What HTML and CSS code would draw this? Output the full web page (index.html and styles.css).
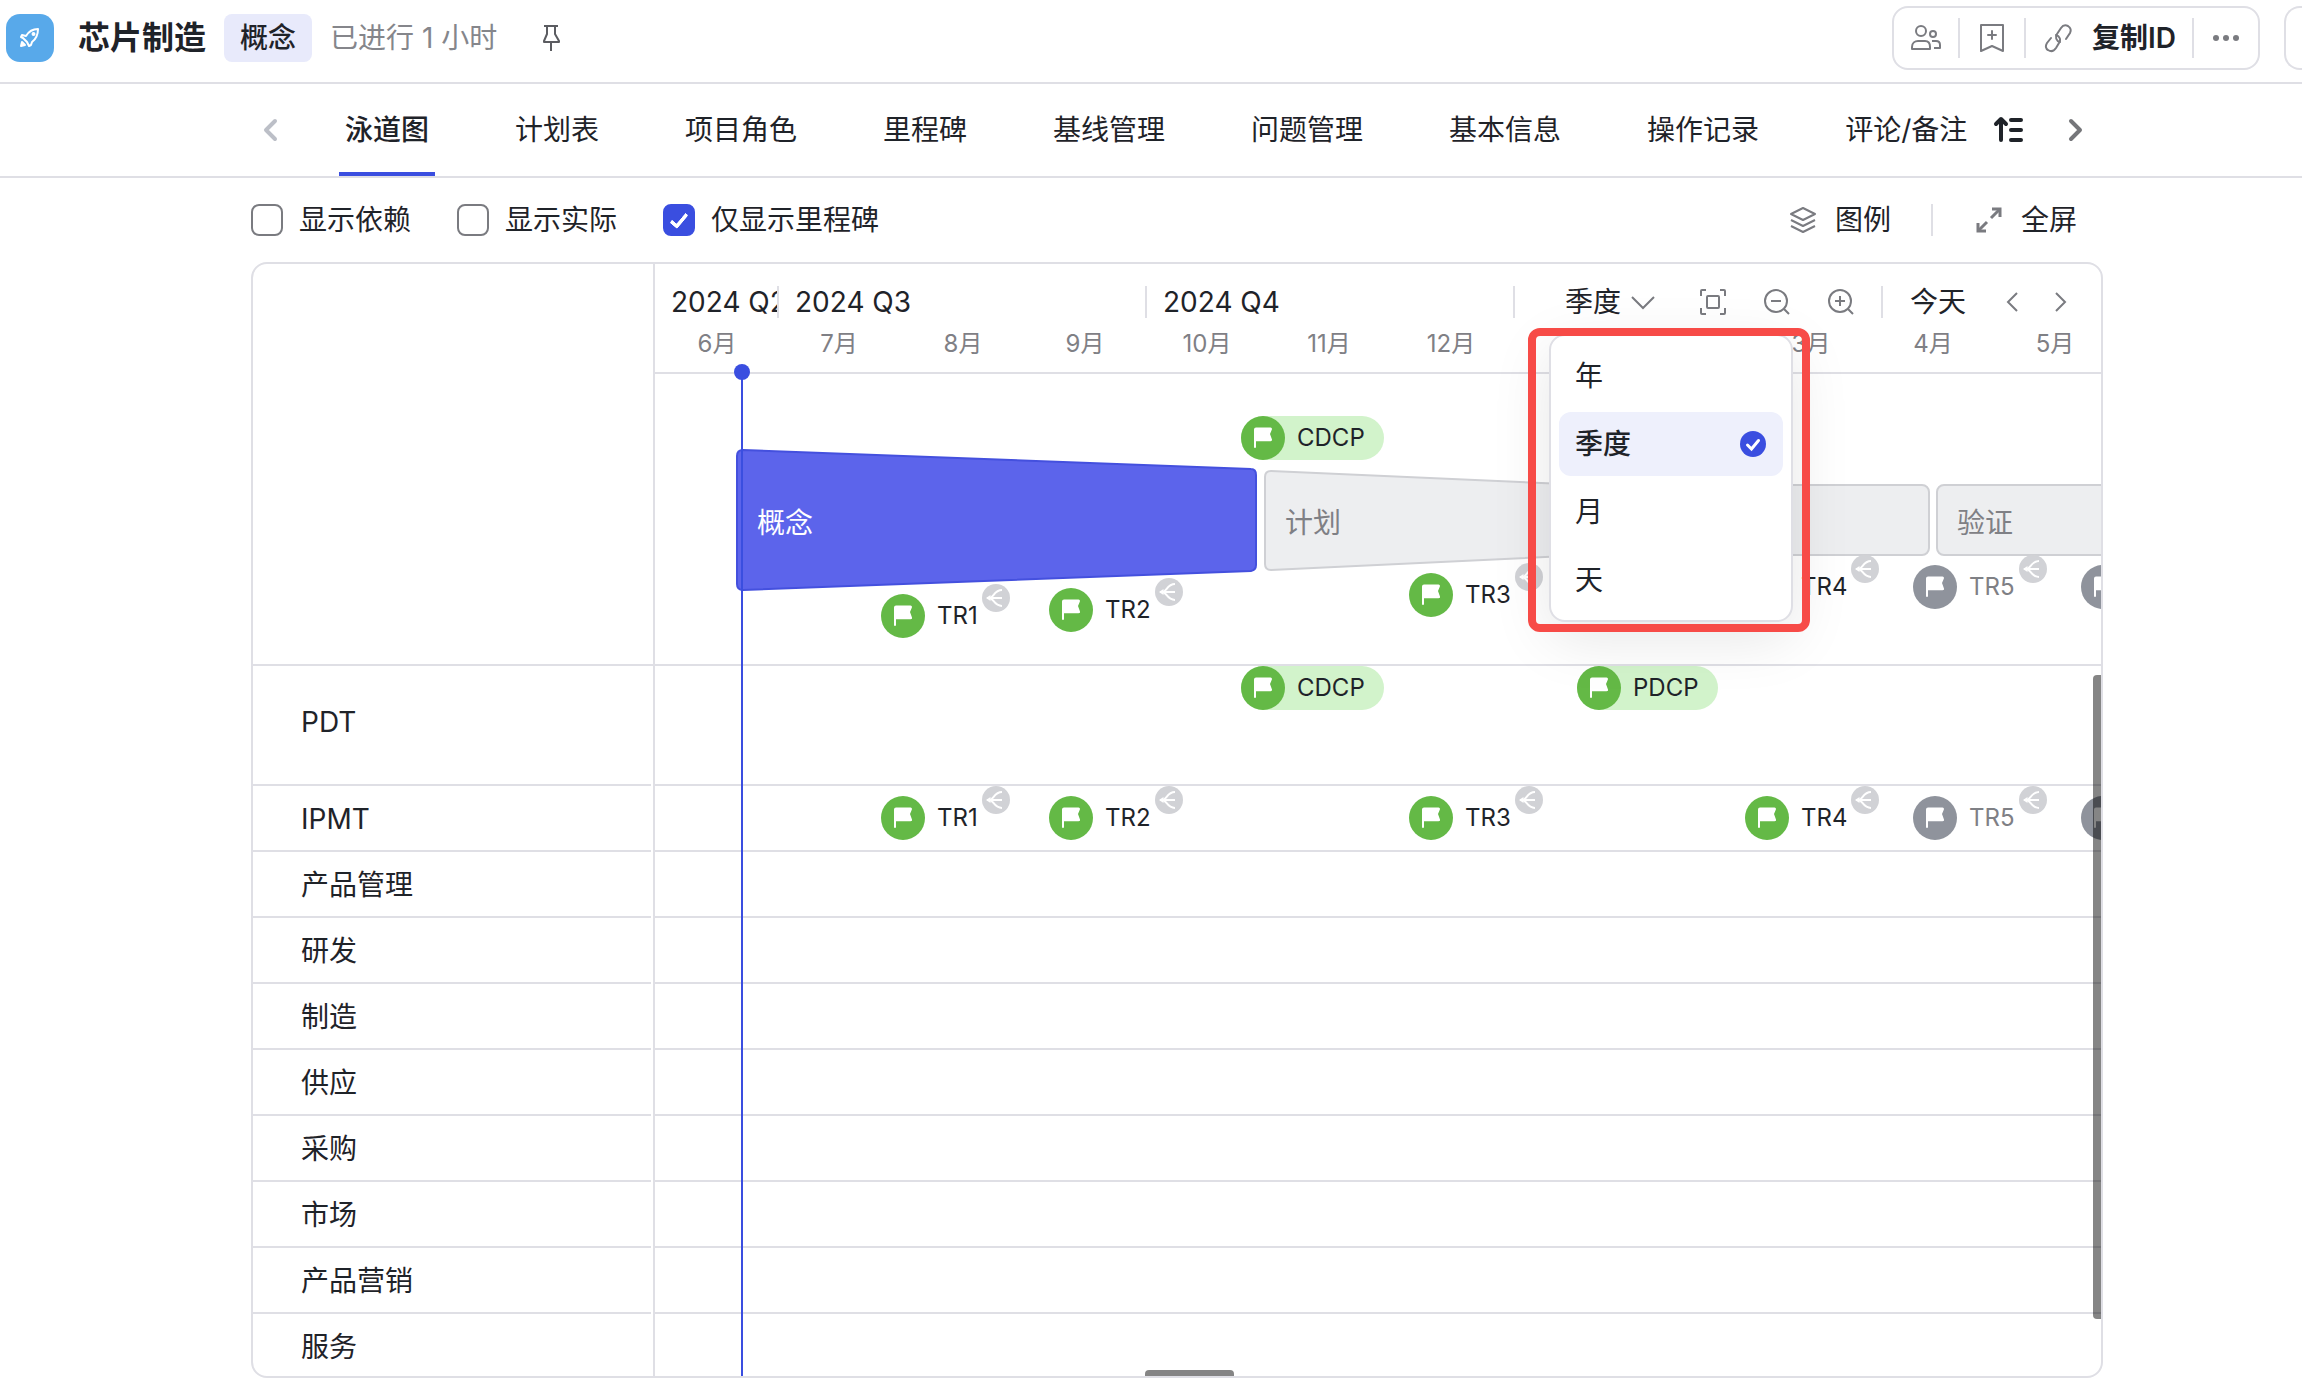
FILE: index.html
```html
<!DOCTYPE html>
<html lang="zh-CN">

<head>
	<meta charset="UTF-8">
	<meta name="viewport" content="width=device-width, initial-scale=1.0">
	<title>芯片制造</title>
	<link rel="stylesheet" href="styles.css">
</head>

<body>
	<!-- shared symbols -->
	<svg class="symbols" aria-hidden="true">
		<symbol id="flag" viewBox="0 0 44 44">
			<path d="M13 13.500a2 2 0 0 1 2-2h14.500a1.500 1.500 0 0 1 1.300 2.200L29 18l1.900 5.200a1.500 1.500 0 0 1-1.400 2H15V31a1 1 0 0 1-2 0z" fill="#fff" />
		</symbol>
		<symbol id="branch" viewBox="0 0 28 28">
			<path d="M5 14h15M7.500 14c4 0 4.500-8 12.500-8M7.500 14c4 0 4.500 8 12.500 8" fill="none" stroke="#fff" stroke-width="2" />
			<path d="M4 14l4.500-3v6z" fill="#fff" />
		</symbol>
	</svg>

	<header class="topbar">
		<span class="logo">
			<svg viewBox="0 0 48 48" fill="none" stroke="#fff" stroke-width="2" stroke-linejoin="round" stroke-linecap="round">
				<path d="M20 22c3-5 7-7 12-7 0 5-2 10-6 13l-1 3-2 1-2-4-4-4-2-1 1-2z" />
				<path d="M16 28l-1 4 4-1z" fill="#fff" />
				<circle cx="27.500" cy="20" r="1" />
			</svg>
		</span>
		<h1>芯片制造</h1>
		<span class="stage">概念</span>
		<span class="elapsed">已进行 1 小时</span>
		<button type="button" class="icon-btn pin" aria-label="固定">
			<svg viewBox="0 0 32 32" fill="none" stroke="#5b5c61" stroke-width="2" stroke-linejoin="round">
				<path d="M9 4h14M12 4v8l-3 7v1h15v-1l-4-7V4M16 20v9" />
			</svg>
		</button>

		<div class="actions">
			<button type="button" aria-label="成员">
				<svg viewBox="0 0 32 32" fill="none" stroke="#7a7b80" stroke-width="2" stroke-linejoin="round">
					<circle cx="11" cy="9" r="5" />
					<circle cx="23" cy="12" r="3" />
					<path d="M2 27v-2c0-4 3-6 6-6h7c3 0 5 2 5 6v2zM22 19h4c3 0 4 2 4 4v3h-6" />
				</svg>
			</button>
			<button type="button" aria-label="收藏">
				<svg viewBox="0 0 32 32" fill="none" stroke="#7a7b80" stroke-width="2" stroke-linejoin="round" stroke-linecap="round">
					<path d="M5 3h22v26l-11-5-11 5zM16 9v8M12 13h8" />
				</svg>
			</button>
			<button type="button" class="copy">
				<svg viewBox="0 0 32 32" fill="none" stroke="#7a7b80" stroke-width="2" stroke-linecap="round">
					<path d="M18 20c-4-1-5-5-3-8l4-6c2-3 5-3 7-2 3 2 3 5 2 7l-4 6" />
					<path d="M14 13c4 1 5 5 3 8l-3 5c-2 3-5 4-8 2-2-1-3-4-1-7l4-5" />
				</svg>
				复制ID
			</button>
			<button type="button" aria-label="更多">
				<svg viewBox="0 0 32 32" fill="#7a7b80">
					<circle cx="6" cy="16" r="3" />
					<circle cx="16" cy="16" r="3" />
					<circle cx="26" cy="16" r="3" />
				</svg>
			</button>
		</div>
		<div class="actions-next"></div>
	</header>

	<nav class="tabs">
		<button type="button" class="icon-btn" aria-label="上一页" disabled>
			<svg viewBox="0 0 32 32" fill="none" stroke="#bcbfc7" stroke-width="4" stroke-linecap="round" stroke-linejoin="round">
				<path d="M20 7l-9 9 9 9" />
			</svg>
		</button>
		<div class="tab-list">
			<a href="#" class="active">泳道图</a>
			<a href="#">计划表</a>
			<a href="#">项目角色</a>
			<a href="#">里程碑</a>
			<a href="#">基线管理</a>
			<a href="#">问题管理</a>
			<a href="#">基本信息</a>
			<a href="#">操作记录</a>
			<a href="#">评论/备注</a>
		</div>
		<div class="tab-tools">
			<button type="button" class="icon-btn" aria-label="排序">
				<svg viewBox="0 0 32 32" fill="none" stroke="#1f2329" stroke-width="4" stroke-linecap="round" stroke-linejoin="round">
					<path d="M9 26V6M4 10l5-5 5 5M19 6h10M19 16h10M19 26h10" />
				</svg>
			</button>
			<button type="button" class="icon-btn" aria-label="下一页">
				<svg viewBox="0 0 32 32" fill="none" stroke="#75767a" stroke-width="4" stroke-linecap="round" stroke-linejoin="round">
					<path d="M12 7l9 9-9 9" />
				</svg>
			</button>
		</div>
	</nav>

	<main>
		<div class="options">
			<label><input type="checkbox"> 显示依赖</label>
			<label><input type="checkbox"> 显示实际</label>
			<label><input type="checkbox" checked> 仅显示里程碑</label>
			<div class="view-tools">
				<button type="button">
					<svg viewBox="0 0 32 32" fill="none" stroke="#7a7b80" stroke-width="2" stroke-linejoin="round">
						<path d="M16 4l12 6-12 6-12-6zM4 16l12 6 12-6M4 22l12 6 12-6" />
					</svg>
					图例
				</button>
				<span class="divider"></span>
				<button type="button">
					<svg viewBox="0 0 32 32" fill="none" stroke="#7a7b80" stroke-width="3">
						<path d="M18 14l8-8M14 18l-8 8" />
						<path d="M19 5h8v8M13 27H5v-8" />
					</svg>
					全屏
				</button>
			</div>
		</div>

		<section class="chart">
			<div class="lane chart-head">
				<div class="lane-name"></div>
				<div class="lane-track">
					<div class="quarters">
						<span class="quarter" style="width: 124px">2024 Q2</span>
						<span class="quarter" style="width: 368px">2024 Q3</span>
						<span class="quarter" style="width: 368px">2024 Q4</span>
						<div class="controls">
							<div class="scale-picker">
								<select aria-label="时间刻度">
									<option>年</option>
									<option selected>季度</option>
									<option>月</option>
									<option>天</option>
								</select>
								<svg class="caret" viewBox="0 0 24 32" fill="none" stroke="#7a7b80" stroke-width="2">
									<path d="M1 11l11 11 11-11" />
								</svg>
								<ul class="menu">
									<li><button type="button">年</button></li>
									<li><button type="button" class="selected">季度
										<svg viewBox="0 0 26 26">
											<circle cx="13" cy="13" r="13" fill="#3a4ee0" />
											<path d="M7.500 14l4 4 7-8.500" fill="none" stroke="#fff" stroke-width="3" stroke-linecap="round" />
										</svg>
									</button></li>
									<li><button type="button">月</button></li>
									<li><button type="button">天</button></li>
								</ul>
								<div class="highlight"></div>
							</div>
							<div class="zoom-tools">
								<button type="button" class="icon-btn" aria-label="适应">
									<svg viewBox="0 0 32 32" fill="none" stroke="#7a7b80" stroke-width="2">
										<rect x="10" y="10" width="12" height="12" rx="1" />
										<path d="M4 10V5q0-1 1-1h4M23 4h4q1 0 1 1v5M28 22v5q0 1-1 1h-4M9 28H5q-1 0-1-1v-5" />
									</svg>
								</button>
								<button type="button" class="icon-btn" aria-label="缩小">
									<svg viewBox="0 0 32 32" fill="none" stroke="#7a7b80" stroke-width="2">
										<circle cx="15" cy="15" r="11" />
										<path d="M10 15h10M23 23l5 5" />
									</svg>
								</button>
								<button type="button" class="icon-btn" aria-label="放大">
									<svg viewBox="0 0 32 32" fill="none" stroke="#7a7b80" stroke-width="2">
										<circle cx="15" cy="15" r="11" />
										<path d="M10 15h10M15 10v10M23 23l5 5" />
									</svg>
								</button>
							</div>
							<span class="divider"></span>
							<button type="button" class="today-btn">今天</button>
							<div class="pager">
								<button type="button" class="icon-btn" aria-label="向前">
									<svg viewBox="0 0 32 32" fill="none" stroke="#7a7b80" stroke-width="2">
										<path d="M21 7l-9 9 9 9" />
									</svg>
								</button>
								<button type="button" class="icon-btn" aria-label="向后">
									<svg viewBox="0 0 32 32" fill="none" stroke="#7a7b80" stroke-width="2">
										<path d="M12 7l9 9-9 9" />
									</svg>
								</button>
							</div>
						</div>
					</div>
					<!-- 4px per day -->
					<div class="months">
						<span style="width: 120px">6月</span>
						<span style="width: 124px">7月</span>
						<span style="width: 124px">8月</span>
						<span style="width: 120px">9月</span>
						<span style="width: 124px">10月</span>
						<span style="width: 120px">11月</span>
						<span style="width: 124px">12月</span>
						<span style="width: 124px"></span>
						<span style="width: 112px"></span>
						<span style="width: 124px">3月</span>
						<span style="width: 120px">4月</span>
						<span style="width: 124px">5月</span>
					</div>
				</div>
			</div>

			<div class="lane overview">
				<div class="lane-name"></div>
				<div class="lane-track">
					<svg class="phases" width="1600" height="290" stroke-width="2" stroke-linejoin="round">
						<path class="phase current" d="M88 76L596 95q5 0 5 6v90q0 5-5 6L88 216q-6 0-6-6V82q0-6 6-6z" />
						<path class="phase" d="M616 97L932 111q6 0 6 6v58q0 6-6 6L616 196q-6 0-6-6v-87q0-6 6-6z" />
						<rect class="phase" x="946" y="111" width="328" height="70" rx="7" />
						<rect class="phase" x="1282" y="111" width="400" height="70" rx="7" />
						<text class="current" x="102" y="159">概念</text>
						<text x="630" y="159">计划</text>
						<text x="1302" y="159">验证</text>
					</svg>
					<div class="milestone pill" style="left: 586px; top: 42px"><svg class="flag"><use href="#flag" /></svg>CDCP</div>
					<div class="milestone" style="left: 226px; top: 220px"><svg class="flag"><use href="#flag" /></svg>TR1<svg class="branch"><use href="#branch" /></svg></div>
					<div class="milestone" style="left: 394px; top: 214px"><svg class="flag"><use href="#flag" /></svg>TR2<svg class="branch"><use href="#branch" /></svg></div>
					<div class="milestone" style="left: 754px; top: 199px"><svg class="flag"><use href="#flag" /></svg>TR3<svg class="branch"><use href="#branch" /></svg></div>
					<div class="milestone" style="left: 1090px; top: 191px"><svg class="flag"><use href="#flag" /></svg>TR4<svg class="branch"><use href="#branch" /></svg></div>
					<div class="milestone pending" style="left: 1258px; top: 191px"><svg class="flag"><use href="#flag" /></svg>TR5<svg class="branch"><use href="#branch" /></svg></div>
					<div class="milestone pending" style="left: 1426px; top: 191px"><svg class="flag"><use href="#flag" /></svg></div>
				</div>
			</div>

			<div class="lane tall">
				<div class="lane-name">PDT</div>
				<div class="lane-track">
					<div class="milestone pill" style="left: 586px"><svg class="flag"><use href="#flag" /></svg>CDCP</div>
					<div class="milestone pill" style="left: 922px"><svg class="flag"><use href="#flag" /></svg>PDCP</div>
				</div>
			</div>
			<div class="lane">
				<div class="lane-name">IPMT</div>
				<div class="lane-track">
					<div class="milestone" style="left: 226px; top: 10px"><svg class="flag"><use href="#flag" /></svg>TR1<svg class="branch"><use href="#branch" /></svg></div>
					<div class="milestone" style="left: 394px; top: 10px"><svg class="flag"><use href="#flag" /></svg>TR2<svg class="branch"><use href="#branch" /></svg></div>
					<div class="milestone" style="left: 754px; top: 10px"><svg class="flag"><use href="#flag" /></svg>TR3<svg class="branch"><use href="#branch" /></svg></div>
					<div class="milestone" style="left: 1090px; top: 10px"><svg class="flag"><use href="#flag" /></svg>TR4<svg class="branch"><use href="#branch" /></svg></div>
					<div class="milestone pending" style="left: 1258px; top: 10px"><svg class="flag"><use href="#flag" /></svg>TR5<svg class="branch"><use href="#branch" /></svg></div>
					<div class="milestone pending" style="left: 1426px; top: 10px"><svg class="flag"><use href="#flag" /></svg></div>
				</div>
			</div>
			<div class="lane">
				<div class="lane-name">产品管理</div>
				<div class="lane-track"></div>
			</div>
			<div class="lane">
				<div class="lane-name">研发</div>
				<div class="lane-track"></div>
			</div>
			<div class="lane">
				<div class="lane-name">制造</div>
				<div class="lane-track"></div>
			</div>
			<div class="lane">
				<div class="lane-name">供应</div>
				<div class="lane-track"></div>
			</div>
			<div class="lane">
				<div class="lane-name">采购</div>
				<div class="lane-track"></div>
			</div>
			<div class="lane">
				<div class="lane-name">市场</div>
				<div class="lane-track"></div>
			</div>
			<div class="lane">
				<div class="lane-name">产品营销</div>
				<div class="lane-track"></div>
			</div>
			<div class="lane">
				<div class="lane-name">服务</div>
				<div class="lane-track"></div>
			</div>

			<div class="today-line"></div>
			<div class="scroll-y"></div>
			<div class="scroll-x"></div>
		</section>
	</main>
</body>

</html>
```
FILE: styles.css
```css
* {
	box-sizing: border-box;
}

body {
	margin: 0;
	height: 100vh;
	display: flex;
	flex-direction: column;
	overflow: hidden;
	background: #fff;
	color: #1f2329;
	font-family: Inter, "Noto Sans CJK SC", sans-serif;
	font-size: 28px;
	line-height: 32px;
}

button,
select {
	appearance: none;
	border: none;
	background: none;
	padding: 0;
	margin: 0;
	color: inherit;
	font: inherit;
	cursor: pointer;
}

svg {
	display: block;
	flex: none;
}

.symbols {
	position: absolute;
	width: 0;
	height: 0;
}

.icon-btn,
.icon-btn svg {
	display: block;
	width: 32px;
	height: 32px;
	flex: none;
}

.divider {
	width: 2px;
	height: 32px;
	background: #dfdfe5;
}

/* top bar */
.topbar {
	display: flex;
	align-items: center;
	flex: none;
	height: 84px;
	padding: 0 0 6px 6px;
	border-bottom: 2px solid #dfdfe5;
}

.logo {
	width: 48px;
	height: 48px;
	border-radius: 14px;
	background: #58a9ea;
}

h1 {
	margin: 0 18px 0 24px;
	font-size: 32px;
	font-weight: 700;
	white-space: nowrap;
}

.stage {
	padding: 8px 16px;
	border-radius: 8px;
	background: #e8eafb;
	font-weight: 500;
}

.elapsed {
	margin-left: 18px;
	color: #85868b;
}

.pin {
	margin-left: 38px;
}

.actions {
	display: flex;
	align-items: center;
	height: 64px;
	margin-left: auto;
	border: 2px solid #dfdfe5;
	border-radius: 16px;
}

.actions button {
	height: 40px;
	padding: 0 16px;
	border-left: 2px solid #dfdfe5;
}

.actions button:first-child {
	border-left: none;
}

.actions svg {
	width: 32px;
	height: 32px;
}

.actions .copy {
	display: flex;
	align-items: center;
	gap: 18px;
	font-weight: 600;
}

.actions-next {
	width: 18px;
	height: 64px;
	margin-left: 24px;
	border: 2px solid #dfdfe5;
	border-right: none;
	border-radius: 16px 0 0 16px;
}

/* tabs */
.tabs {
	display: flex;
	align-items: center;
	flex: none;
	height: 94px;
	padding: 0 211px 0 255px;
	border-bottom: 2px solid #dfdfe5;
}

.tab-list {
	display: flex;
	gap: 74px;
	height: 92px;
	margin-left: 52px;
}

.tab-list a {
	padding: 30px 6px 26px;
	border-bottom: 4px solid transparent;
	color: inherit;
	text-decoration: none;
	white-space: nowrap;
}

.tab-list .active {
	border-color: #3a4ee0;
	font-weight: 500;
}

.tab-tools {
	display: flex;
	gap: 35px;
	margin-left: auto;
}

/* options */
main {
	display: flex;
	flex-direction: column;
	flex: 1;
	min-height: 0;
	padding: 0 199px 6px 251px;
}

.options {
	display: flex;
	align-items: center;
	flex: none;
	gap: 46px;
	height: 84px;
}

.options label {
	display: flex;
	align-items: center;
	gap: 16px;
}

.options input {
	appearance: none;
	position: relative;
	width: 32px;
	height: 32px;
	margin: 0;
	border: 2px solid #7a7b80;
	border-radius: 8px;
}

.options input:checked {
	border-color: #3a4ee0;
	background: #3a4ee0;
}

.options input:checked::after {
	content: "";
	box-sizing: border-box;
	position: absolute;
	left: 9px;
	top: 4px;
	width: 10px;
	height: 18px;
	border: solid #fff;
	border-width: 0 4px 4px 0;
	border-radius: 2px;
	transform: rotate(40deg);
}

.view-tools {
	display: flex;
	align-items: center;
	gap: 40px;
	margin-left: auto;
	padding-right: 26px;
}

.view-tools button {
	display: flex;
	align-items: center;
	gap: 16px;
}

.view-tools svg {
	width: 32px;
	height: 32px;
}

/* chart */
.chart {
	position: relative;
	flex: 1;
	min-height: 0;
	overflow: hidden;
	border: 2px solid #dfdfe5;
	border-radius: 16px;
}

.lane {
	display: flex;
	height: 66px;
}

.lane-name {
	display: flex;
	align-items: center;
	flex: none;
	width: 398px;
	margin-right: 2px;
	padding: 2px 0 0 48px;
	border-bottom: 2px solid #dfdfe5;
}

.lane-track {
	position: relative;
	flex: 1;
	min-width: 0;
	border-left: 2px solid #dfdfe5;
	border-bottom: 2px solid #dfdfe5;
}

.lane.tall {
	height: 120px;
}

.tall .lane-name {
	padding-bottom: 8px;
}

.chart-head {
	height: 110px;
}

.chart-head .lane-name {
	border-bottom: none;
}

.chart-head .lane-track {
	padding-top: 22px;
}

.overview {
	height: 292px;
}

.overview .lane-name {
	width: 400px;
	margin-right: 0;
}

.quarters,
.months {
	display: flex;
}

.quarter {
	flex: none;
	padding-left: 16px;
	border-right: 2px solid #dfdfe5;
	overflow: hidden;
	white-space: nowrap;
}

.months {
	margin-top: 10px;
	padding-left: 2px;
	color: #7f8085;
	font-size: 24px;
	text-align: center;
}

.months span {
	flex: none;
}

.controls {
	display: flex;
	align-items: center;
	flex: 1;
	padding: 0 25px 0 50px;
}

.zoom-tools {
	display: flex;
	gap: 32px;
	margin-left: 42px;
}

.controls .divider {
	margin: 0 27px 0 24px;
}

.pager {
	display: flex;
	gap: 16px;
	margin-left: auto;
}

.scale-picker {
	position: relative;
	z-index: 2;
	display: flex;
	gap: 10px;
}

.scale-picker select {
	width: 56px;
	height: 32px;
}

.caret {
	width: 24px;
	height: 32px;
}

.menu {
	position: absolute;
	top: 48px;
	left: -16px;
	display: flex;
	flex-direction: column;
	gap: 4px;
	width: 244px;
	margin: 0;
	padding: 8px;
	list-style: none;
	background: #fff;
	border: 2px solid #dfdfe5;
	border-radius: 16px;
	box-shadow: 0 16px 60px rgba(0, 0, 0, 0.1);
}

.menu button {
	display: flex;
	align-items: center;
	justify-content: space-between;
	width: 100%;
	height: 64px;
	padding: 0 17px 0 16px;
	border-radius: 12px;
}

.menu .selected {
	background: #eef0fc;
	font-weight: 500;
}

.menu svg {
	width: 26px;
	height: 26px;
}

.highlight {
	position: absolute;
	top: 42px;
	left: -37px;
	width: 282px;
	height: 304px;
	border: 8px solid #f74b47;
	border-radius: 12px;
	pointer-events: none;
}

/* phases and milestones */
.phases {
	position: absolute;
	left: 0;
	top: 0;
	fill: #7f8085;
}

.phase {
	fill: #edeef0;
	stroke: #cfd0d4;
}

.phase.current {
	fill: #5c64eb;
	stroke: #4450de;
}

.phases text {
	stroke: none;
}

.phases text.current {
	fill: #fff;
}

.milestone {
	position: absolute;
	display: flex;
	align-items: center;
	gap: 12px;
	height: 44px;
	font-size: 24px;
	line-height: 44px;
}

.flag {
	width: 44px;
	height: 44px;
	border-radius: 50%;
	background: #64b946;
}

.pill {
	padding-right: 19px;
	border-radius: 22px;
	background: #d2f3cb;
}

.pending {
	color: #7f8085;
}

.pending .flag {
	background: #8f939c;
}

.branch {
	position: absolute;
	left: 100%;
	top: -10px;
	width: 28px;
	height: 28px;
	margin-left: 4px;
	border-radius: 50%;
	background: #d1d2d6;
}

.today-line {
	position: absolute;
	left: 488px;
	top: 108px;
	bottom: 0;
	width: 2px;
	background: #3a4ee0;
}

.today-line::before {
	content: "";
	position: absolute;
	left: -7px;
	top: -8px;
	width: 16px;
	height: 16px;
	border-radius: 50%;
	background: #3a4ee0;
}

.scroll-y,
.scroll-x {
	position: absolute;
	background: rgba(0, 0, 0, 0.48);
}

.scroll-y {
	right: 0;
	top: 411px;
	bottom: 57px;
	width: 8px;
	border-radius: 4px 0 0 4px;
}

.scroll-x {
	left: 892px;
	bottom: 0;
	width: 89px;
	height: 6px;
	border-radius: 4px 4px 0 0;
}
```
